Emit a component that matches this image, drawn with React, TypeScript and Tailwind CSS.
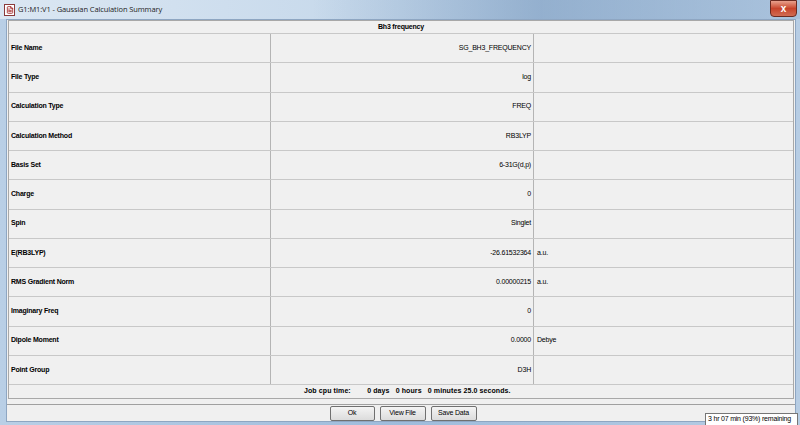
import { FileText } from 'lucide-react'

const rows = [
    { label: 'File Name', value: 'SG_BH3_FREQUENCY', unit: '' },
    { label: 'File Type', value: 'log', unit: '' },
    { label: 'Calculation Type', value: 'FREQ', unit: '' },
    { label: 'Calculation Method', value: 'RB3LYP', unit: '' },
    { label: 'Basis Set', value: '6-31G(d,p)', unit: '' },
    { label: 'Charge', value: '0', unit: '' },
    { label: 'Spin', value: 'Singlet', unit: '' },
    { label: 'E(RB3LYP)', value: '-26.61532364', unit: 'a.u.' },
    { label: 'RMS Gradient Norm', value: '0.00000215', unit: 'a.u.' },
    { label: 'Imaginary Freq', value: '0', unit: '' },
    { label: 'Dipole Moment', value: '0.0000', unit: 'Debye' },
    { label: 'Point Group', value: 'D3H', unit: '' }
]

export default function App() {
    return (
        <div
            className="relative w-[800px] h-[425px] overflow-hidden flex flex-col bg-gradient-to-r from-[#b9cfe6] via-[#9fbcdc] to-[#b7cde4] text-[7px] tracking-[-0.2px] text-black"
            style={{ fontFamily: '"Liberation Sans", "DejaVu Sans", sans-serif' }}
        >
            {/* Title bar */}
            <div className="h-[19px] flex items-center bg-gradient-to-r from-[#dbe7f3] via-[#c4d7ea] to-[#a9c2dc]">
                <div className="ml-[4px] w-[11px] h-[12px] bg-white border border-[#8a3a3a] flex items-center justify-center">
                    <FileText className="w-[8px] h-[8px] text-[#a02020]" strokeWidth={2.5} />
                </div>
                <span className="ml-[3px] text-[7.5px] tracking-[-0.1px] text-[#1e1e1e]" style={{ fontFamily: '"Open Sans", "DejaVu Sans", sans-serif' }}>
                    G1:M1:V1 - Gaussian Calculation Summary
                </span>
                <div className="flex-1 h-full bg-gradient-to-r from-transparent via-[#6d90b8] to-[#a3bdd9] opacity-50 ml-[150px]" />
                <div className="w-[27px] h-[17px] mr-[3px] self-start rounded-b-[4px] bg-gradient-to-b from-[#e8a08c] via-[#c7432a] to-[#d06b52] border border-[#6b2a20] flex items-center justify-center text-white text-[10px] font-bold">
                    x
                </div>
            </div>

            {/* Client area */}
            <div className="flex-1 ml-[6px] mr-[4px] mb-[3px] bg-[#f0f0f0] border border-[#8ea6c2] flex flex-col">
                <div className="mx-[1px] border border-[#a8a8a8] bg-[#f0f0f0]">
                    <div className="h-[13px] flex items-center justify-center font-bold border-b border-[#c8c8c8]">
                        Bh3 frequency
                    </div>
                    <div className="h-[351px] grid grid-rows-12">
                        {rows.map((row) => (
                            <div key={row.label} className="grid grid-cols-[262px_263px_1fr] border-b border-[#c8c8c8]">
                                <div className="flex items-center pl-[2px] font-bold border-r border-[#b4b4b4]">{row.label}</div>
                                <div className="flex items-center justify-end pr-[2px] border-r border-[#b4b4b4]">{row.value}</div>
                                <div className="flex items-center pl-[3px]">{row.unit}</div>
                            </div>
                        ))}
                    </div>
                    <div className="h-[13px] flex items-center pl-[295px] font-bold whitespace-pre tracking-[0.1px]">
                        Job cpu time:        0 days   0 hours   0 minutes 25.0 seconds.
                    </div>
                </div>
                <div className="mt-[5px] border-t border-[#a0a0a0]" />
                <div className="flex justify-center gap-[5px] mt-[1px] pl-[4px]">
                    <button className="w-[45px] h-[15px] border border-[#707070] rounded-[2px] bg-gradient-to-b from-[#f4f4f4] to-[#dcdcdc] text-[7px]">Ok</button>
                    <button className="w-[46px] h-[15px] border border-[#707070] rounded-[2px] bg-gradient-to-b from-[#f4f4f4] to-[#dcdcdc] text-[7px]">View File</button>
                    <button className="w-[46px] h-[15px] border border-[#707070] rounded-[2px] bg-gradient-to-b from-[#f4f4f4] to-[#dcdcdc] text-[7px]">Save Data</button>
                </div>
            </div>

            {/* Tooltip overlay */}
            <div className="absolute left-[705px] top-[413px] w-[93px] h-[13px] bg-white border border-[#767676] text-[7px] flex items-center pl-[2px] whitespace-nowrap">
                3 hr 07 min (93%) remaining
            </div>
        </div>
    )
}
